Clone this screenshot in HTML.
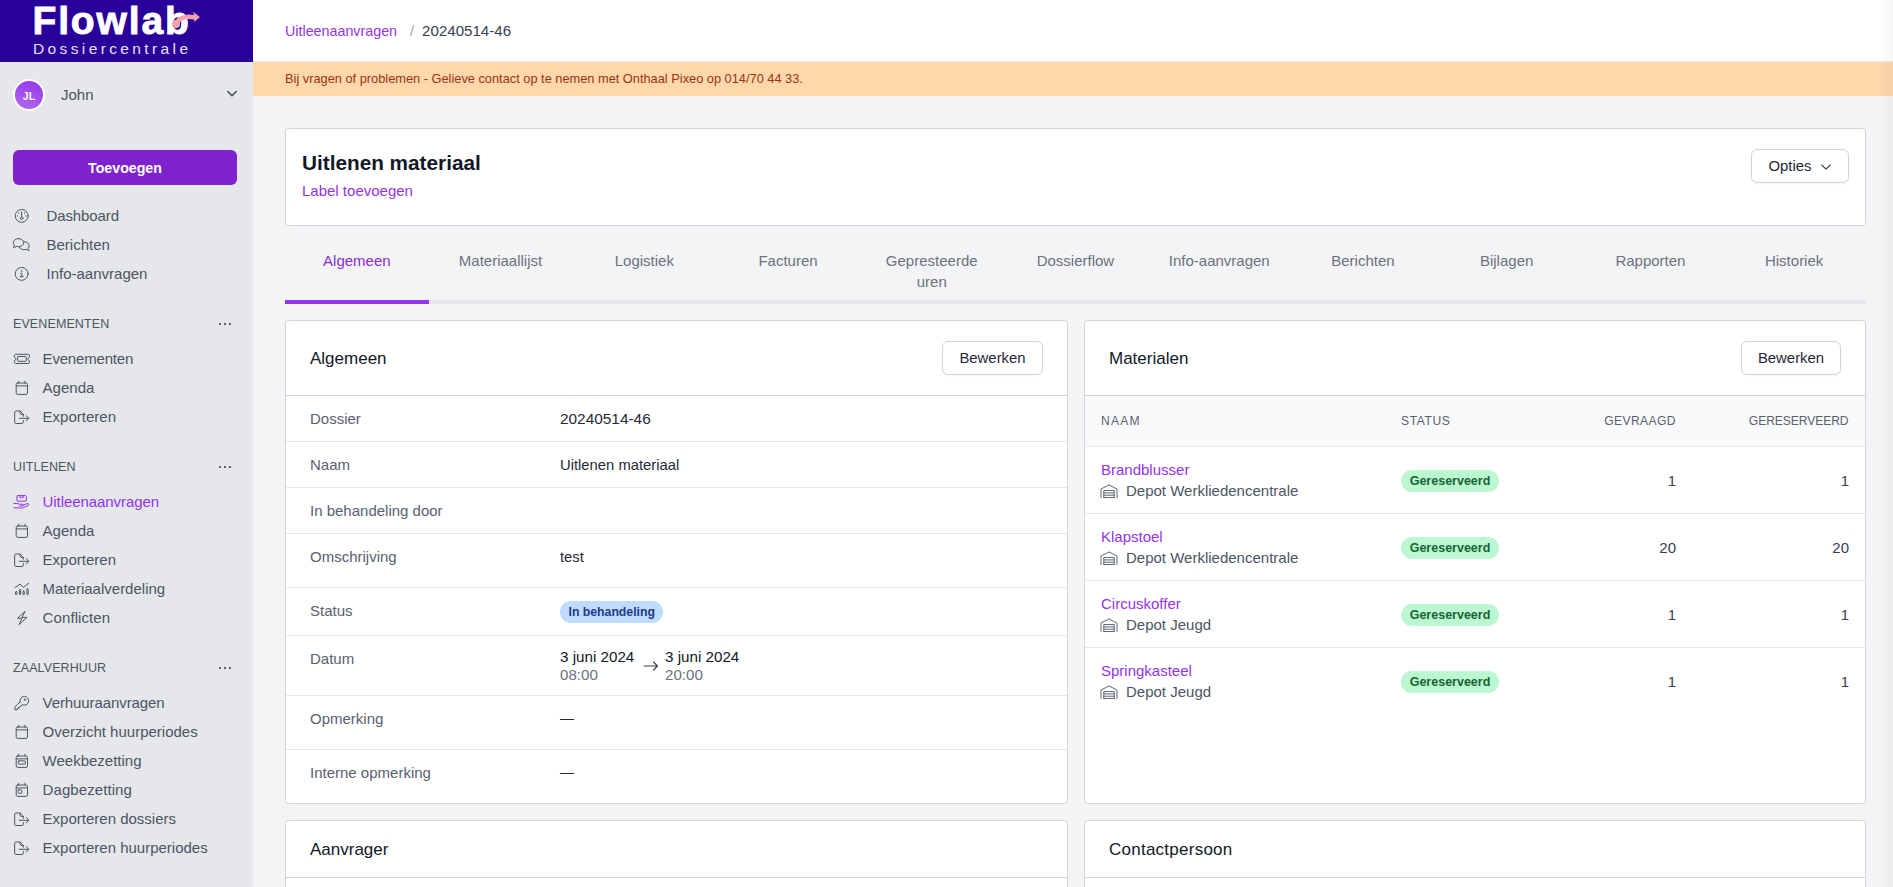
<!DOCTYPE html>
<html lang="nl">
<head>
<meta charset="utf-8">
<title>Uitlenen materiaal - Flowlab Dossiercentrale</title>
<style>
*{box-sizing:border-box;margin:0;padding:0}
html,body{width:1893px;height:887px;overflow:hidden}
body{font-family:"Liberation Sans",sans-serif;color:#111827;background:#f3f4f6;position:relative;font-size:15px}
a{text-decoration:none;color:#9333ea}
.abs{position:absolute}
/* sidebar */
#side{position:absolute;left:0;top:0;width:253px;height:887px;background:#e5e7eb}
#logo{position:absolute;left:0;top:0;width:253px;height:62px;background:#2a009a;color:#fff}
#logo .l1{position:absolute;left:32.500px;top:-1px;font-size:39px;font-weight:bold;letter-spacing:1.85px;line-height:44px;-webkit-text-stroke:0.9px #fff}
#logo .l2{position:absolute;left:33px;top:38.500px;font-size:15.5px;letter-spacing:3.38px;line-height:20px;color:#e6e0f7}
#user{position:absolute;left:0;top:62px;width:253px;height:66px}
#avatar{position:absolute;left:13px;top:17px;width:32px;height:32px;border-radius:50%;background:linear-gradient(200deg,#9333ea,#b26cf0);border:2px solid #fff;color:#fff;font-size:10.5px;font-weight:bold;text-align:center;line-height:31px}
#user .nm{position:absolute;left:61px;top:24px;font-size:15px;line-height:18px;color:#4b5563}
#add{position:absolute;left:13px;top:150px;width:224px;height:35px;border-radius:6px;background:#7e22ce;color:#fff;font-weight:bold;font-size:14.2px;text-align:center;line-height:37px}
.nav{position:absolute;left:0;width:253px;height:20px;line-height:20px;font-size:15px;color:#4b5563;white-space:nowrap}
.nav span{position:absolute;left:42.600px;top:0}
.nav.top span{left:46.500px}
.nav svg{position:absolute;left:10px;top:0;width:24px;height:20px;stroke:#4f5867;fill:none;stroke-width:1;stroke-linecap:round;stroke-linejoin:round}
.nav.act{color:#9333ea}
.nav.act svg{stroke:#9333ea}
.sec{position:absolute;left:13px;width:224px;height:18px;line-height:20px;font-size:12.5px;letter-spacing:0.1px;color:#4b5563;white-space:nowrap}
.sec .dots{position:absolute;left:206px;top:9px;fill:#535c6b}
/* main */
#topbar{position:absolute;left:253px;top:0;width:1640px;height:62px;background:#fff;border-bottom:1px solid #e5e7eb}
#crumb{position:absolute;left:32px;top:21px;font-size:14.5px;line-height:20px;color:#374151;white-space:nowrap}
#crumb .sl{color:#9ca3af;margin:0 8px 0 13px}
#banner{position:absolute;left:253px;top:62px;width:1640px;height:34px;background:#fed7aa;color:#9a3412;font-size:12.8px;line-height:34px;padding-left:32px;white-space:nowrap}
.card{position:absolute;background:#fff;border:1px solid #d1d5db;border-radius:3.500px}
h1{position:absolute;left:16px;top:21px;font-size:20.75px;line-height:26px;font-weight:bold;color:#111827;white-space:nowrap}
.btn{position:absolute;background:#fff;border:1px solid #d1d5db;border-radius:6px;box-shadow:0 1px 2px rgba(0,0,0,0.05);font-size:14.9px;color:#1f2937;text-align:center;white-space:nowrap}
.tab{position:absolute;top:250px;width:143.7px;text-align:center;font-size:15px;line-height:21px;color:#6b7280}
.ctitle{position:absolute;left:24px;top:27px;font-size:17px;line-height:22px;color:#111827;white-space:nowrap}
.hr{position:absolute;left:0;right:0;height:1px;background:#e5e7eb}
.lb{position:absolute;left:24px;font-size:15px;line-height:20px;color:#596170;white-space:nowrap}
.vl{position:absolute;left:274px;font-size:14.8px;line-height:20px;color:#1f2937;white-space:nowrap}
.badge{display:inline-block;border-radius:11px;height:22px;line-height:22px;font-size:12.5px;font-weight:bold;padding:0 8.700px;white-space:nowrap}
.th{position:absolute;top:91.500px;font-size:12.1px;color:#596170;line-height:16px;white-space:nowrap}
.mn{position:absolute;left:16px;font-size:15px;line-height:20px;white-space:nowrap}
.ms{position:absolute;left:41px;font-size:15px;line-height:20px;color:#4b5563;white-space:nowrap}
.num{position:absolute;font-size:15px;line-height:20px;color:#374151;text-align:right;white-space:nowrap}
</style>
</head>
<body>
<div id="side">
  <div id="logo"><div class="l1">Flowlab</div><div class="l2">Dossiercentrale</div><svg class="abs" style="left:168px;top:8px" width="36" height="22" viewBox="168 8 36 22"><circle cx="176" cy="24.100" r="4" fill="#f4a3ad"/><path d="M176.500 22.500C180 17.600 187 15.600 194.500 17.300" fill="none" stroke="#f4a3ad" stroke-width="4.600" stroke-linecap="round"/><path d="M192.900 11.700L199.900 17.100 194 22.300C195 19.500 194.600 14.500 192.900 11.700z" fill="#f4a3ad"/></svg></div>
  <div id="user"><div id="avatar">JL</div><div class="nm">John</div><svg class="abs" style="left:226px;top:27px" width="12" height="10" viewBox="0 0 12 10" fill="none" stroke="#374151" stroke-width="1.350" stroke-linecap="round" stroke-linejoin="round"><path d="M1.800 2.500l4.200 4.200 4.200-4.200"/></svg></div>
  <div id="add">Toevoegen</div>
  <div class="nav top" style="top:206px"><svg viewBox="0 0 24 20"><circle cx="11.650" cy="9.900" r="6.450"/><path d="M11.650 5.800v5.200"/><circle cx="11.650" cy="12.300" r="1.250"/><path d="M7.500 9.900h.01M15.800 9.900h.01M8.700 6.900h.01M14.600 6.900h.01" stroke-width="1.200"/></svg><span style="letter-spacing:-0.1px">Dashboard</span></div>
  <div class="nav top" style="top:235px"><svg viewBox="0 0 24 20"><path d="M8.500 3.600c-2.900 0-5.200 1.800-5.200 4.100 0 1 .4 1.900 1.200 2.600-.2.800-.6 1.500-1.200 2.100 1.200 0 2.300-.4 3.100-1 .7.200 1.400.300 2.100.300 2.900 0 5.200-1.800 5.200-4.100S11.400 3.600 8.500 3.600z"/><path d="M14.400 6.700c2.700.200 4.800 1.900 4.800 4 0 1-.5 1.900-1.200 2.600.2.800.6 1.500 1.200 2.100-1.200 0-2.300-.4-3.100-1-.7.200-1.300.300-2 .300-2.200 0-4.100-1-4.800-2.500"/></svg><span>Berichten</span></div>
  <div class="nav top" style="top:264px"><svg viewBox="0 0 24 20"><circle cx="11.650" cy="9.900" r="6.450"/><path d="M10.500 9.300h1.300v3.200M10.300 12.600h2.900"/><path d="M11.500 7.100h.01" stroke-width="1.500"/></svg><span>Info-aanvragen</span></div>
  <div class="sec" style="top:314px">EVENEMENTEN<svg class="dots" width="14" height="4" viewBox="0 0 14 4"><rect x="0" y="0" width="2" height="2.100" rx=".2"/><rect x="5" y="0" width="2" height="2.100" rx=".2"/><rect x="10" y="0" width="2" height="2.100" rx=".2"/></svg></div>
  <div class="nav " style="top:349px"><svg viewBox="0 0 24 20"><path d="M4.400 6.400c0-.6.500-1.100 1.100-1.100h12.800c.6 0 1.100.5 1.100 1.100v1.700c-.9.200-1.500.9-1.500 1.800s.6 1.600 1.500 1.800v1.700c0 .6-.5 1.100-1.100 1.100H5.500c-.6 0-1.100-.5-1.100-1.100v-1.700c.9-.2 1.500-.9 1.500-1.800s-.6-1.600-1.500-1.800z"/><rect x="7.600" y="7.500" width="8.600" height="4.800" rx=".7"/></svg><span style="letter-spacing:-0.19px">Evenementen</span></div>
  <div class="nav " style="top:378px"><svg viewBox="0 0 24 20"><rect x="6.2" y="5" width="11.300" height="11.400" rx="1.500"/><path d="M6.200 7.900h11.300M8.700 3.200v1.800M15 3.200v1.800"/></svg><span>Agenda</span></div>
  <div class="nav " style="top:407px"><svg viewBox="0 0 24 20"><path d="M13.300 13.500v1.900c0 .6-.5 1.100-1.100 1.100H5.800c-.6 0-1.100-.5-1.100-1.100V5.100c0-.6.500-1.100 1.100-1.100h4.300l3.200 3.400v2"/><path d="M10.100 4.100v2.300c0 .6.500 1.100 1.100 1.100h2.100"/><path d="M9.300 11.300h9.500M16.200 8.700l2.700 2.600-2.700 2.600"/></svg><span>Exporteren</span></div>
  <div class="sec" style="top:457px">UITLENEN<svg class="dots" width="14" height="4" viewBox="0 0 14 4"><rect x="0" y="0" width="2" height="2.100" rx=".2"/><rect x="5" y="0" width="2" height="2.100" rx=".2"/><rect x="10" y="0" width="2" height="2.100" rx=".2"/></svg></div>
  <div class="nav act" style="top:492px"><svg viewBox="0 0 24 20"><rect x="6.900" y="3.600" width="9.400" height="5.600" rx=".9"/><path d="M10.100 3.600v2.300l1.500-.6 1.500.6V3.600"/><path d="M4 11.500h2.800c1 0 1.600.3 2.300.7h3c.7 0 1.100.4 1.100.9s-.4.900-1.100.9H9.600"/><path d="M13.200 13.200l3.700-1.500c.8-.3 1.500-.1 1.800.4.300.6 0 1.100-.6 1.400l-5.200 2.400c-.5.200-1 .3-1.600.2l-3.700-.3H4"/></svg><span style="letter-spacing:-0.07px">Uitleenaanvragen</span></div>
  <div class="nav " style="top:521px"><svg viewBox="0 0 24 20"><rect x="6.2" y="5" width="11.300" height="11.400" rx="1.500"/><path d="M6.200 7.900h11.300M8.700 3.200v1.800M15 3.200v1.800"/></svg><span>Agenda</span></div>
  <div class="nav " style="top:550px"><svg viewBox="0 0 24 20"><path d="M13.300 13.500v1.900c0 .6-.5 1.100-1.100 1.100H5.800c-.6 0-1.100-.5-1.100-1.100V5.100c0-.6.500-1.100 1.100-1.100h4.300l3.200 3.400v2"/><path d="M10.100 4.100v2.300c0 .6.500 1.100 1.100 1.100h2.100"/><path d="M9.300 11.300h9.500M16.200 8.700l2.700 2.600-2.700 2.600"/></svg><span>Exporteren</span></div>
  <div class="nav " style="top:579px"><svg viewBox="0 0 24 20"><path d="M5.100 8.600l5-3.500 3.200 3.300 5.400-4.100"/><rect x="5.5" y="12.5" width="1.3" height="3.2" rx=".65"/><rect x="9.4" y="10.5" width="1.3" height="5.2" rx=".65"/><rect x="13" y="12" width="1.3" height="3.700" rx=".65"/><rect x="16.9" y="9.5" width="1.3" height="6.2" rx=".65"/></svg><span>Materiaalverdeling</span></div>
  <div class="nav " style="top:608px"><svg viewBox="0 0 24 20"><path d="M14.800 3.600L7.400 10.200h4.700L9 16.600l8-7.200h-4.600z"/></svg><span style="letter-spacing:0.09px">Conflicten</span></div>
  <div class="sec" style="top:658px">ZAALVERHUUR<svg class="dots" width="14" height="4" viewBox="0 0 14 4"><rect x="0" y="0" width="2" height="2.100" rx=".2"/><rect x="5" y="0" width="2" height="2.100" rx=".2"/><rect x="10" y="0" width="2" height="2.100" rx=".2"/></svg></div>
  <div class="nav " style="top:693px"><svg viewBox="0 0 24 20"><path d="M10.050 8.940L4.900 13.900V16.700H7.600V15.200H9.200V13.700H10.500L12.100 11.610A4.400 4.400 0 1 0 10.050 8.940z"/><circle cx="14.900" cy="6.700" r=".7"/></svg><span style="letter-spacing:-0.09px">Verhuuraanvragen</span></div>
  <div class="nav " style="top:722px"><svg viewBox="0 0 24 20"><rect x="6.2" y="5" width="11.300" height="11.400" rx="1.500"/><path d="M6.200 7.900h11.300M8.700 3.200v1.800M15 3.200v1.800"/></svg><span>Overzicht huurperiodes</span></div>
  <div class="nav " style="top:751px"><svg viewBox="0 0 24 20"><rect x="6.2" y="5" width="11.300" height="11.400" rx="1.500"/><path d="M6.200 7.900h11.300M8.700 3.200v1.800M15 3.200v1.800"/><rect x="8.300" y="9.900" width="7.100" height="3.200" rx=".6"/></svg><span>Weekbezetting</span></div>
  <div class="nav " style="top:780px"><svg viewBox="0 0 24 20"><rect x="6.2" y="5" width="11.300" height="11.400" rx="1.500"/><path d="M6.200 7.900h11.300M8.700 3.200v1.800M15 3.200v1.800"/><rect x="8" y="9.800" width="3.800" height="3.500" rx=".8"/></svg><span style="letter-spacing:0.08px">Dagbezetting</span></div>
  <div class="nav " style="top:809px"><svg viewBox="0 0 24 20"><path d="M13.300 13.500v1.900c0 .6-.5 1.100-1.100 1.100H5.800c-.6 0-1.100-.5-1.100-1.100V5.100c0-.6.500-1.100 1.100-1.100h4.300l3.200 3.400v2"/><path d="M10.100 4.100v2.300c0 .6.500 1.100 1.100 1.100h2.100"/><path d="M9.300 11.300h9.500M16.200 8.700l2.700 2.600-2.700 2.600"/></svg><span>Exporteren dossiers</span></div>
  <div class="nav " style="top:838px"><svg viewBox="0 0 24 20"><path d="M13.300 13.500v1.900c0 .6-.5 1.100-1.100 1.100H5.800c-.6 0-1.100-.5-1.100-1.100V5.100c0-.6.500-1.100 1.100-1.100h4.300l3.200 3.400v2"/><path d="M10.100 4.100v2.300c0 .6.500 1.100 1.100 1.100h2.100"/><path d="M9.300 11.300h9.500M16.200 8.700l2.700 2.600-2.700 2.600"/></svg><span>Exporteren huurperiodes</span></div>
</div>
<div id="topbar"><div id="crumb"><a style="font-size:14.3px">Uitleenaanvragen</a><span class="sl">/</span><span style="font-size:15.1px">20240514-46</span></div></div>
<div id="banner">Bij vragen of problemen - Gelieve contact op te nemen met Onthaal Pixeo op 014/70 44 33.</div>
<div class="card" style="left:285px;top:128px;width:1581px;height:98px">
  <h1>Uitlenen materiaal</h1>
  <a class="abs" style="left:16px;top:52px;font-size:15px;line-height:20px;white-space:nowrap">Label toevoegen</a>
  <div class="btn" style="left:1465px;top:20px;width:98px;height:34px;line-height:32px;text-align:left;padding-left:16.500px">Opties<svg class="abs" style="left:68px;top:10.500px" width="12" height="12" viewBox="0 0 12 12" fill="none" stroke="#374151" stroke-width="1.1" stroke-linecap="round" stroke-linejoin="round"><path d="M1.800 4l4.200 4.200L10.200 4"/></svg></div>
</div>
<div class="abs" style="left:285px;top:300px;width:1581px;height:4px;background:#e5e7eb"></div>
<div class="abs" style="left:285px;top:300px;width:144px;height:4px;background:#9333ea"></div>
<div class="tab" style="left:285.0px;color:#8b2bd9">Algemeen</div>
<div class="tab" style="left:428.7px">Materiaallijst</div>
<div class="tab" style="left:572.5px">Logistiek</div>
<div class="tab" style="left:716.2px">Facturen</div>
<div class="tab" style="left:859.9px">Gepresteerde<br>uren</div>
<div class="tab" style="left:1003.6px">Dossierflow</div>
<div class="tab" style="left:1147.4px">Info-aanvragen</div>
<div class="tab" style="left:1291.1px">Berichten</div>
<div class="tab" style="left:1434.8px">Bijlagen</div>
<div class="tab" style="left:1578.6px">Rapporten</div>
<div class="tab" style="left:1722.3px">Historiek</div>
<div class="card" style="left:285px;top:320px;width:783px;height:484px">
  <div class="ctitle">Algemeen</div>
  <div class="btn" style="left:656px;top:20px;width:101px;height:34px;line-height:32px">Bewerken</div>
  <div class="hr" style="top:74px;background:#d1d5db"></div>
  <div class="lb" style="top:88px">Dossier</div>
  <div class="vl" style="top:88px;font-size:15.4px">20240514-46</div>
  <div class="hr" style="top:120px"></div>
  <div class="lb" style="top:134px">Naam</div>
  <div class="vl" style="top:134px">Uitlenen materiaal</div>
  <div class="hr" style="top:166px"></div>
  <div class="lb" style="top:180px">In behandeling door</div>
  <div class="hr" style="top:212px"></div>
  <div class="lb" style="top:226px">Omschrijving</div>
  <div class="vl" style="top:226px">test</div>
  <div class="hr" style="top:266px"></div>
  <div class="lb" style="top:280px">Status</div>
  <div class="vl" style="top:280px"><span class="badge" style="background:#bfdbfe;color:#1e3a8a;font-size:12.25px;padding:0 8.500px">In behandeling</span></div>
  <div class="hr" style="top:314px"></div>
  <div class="lb" style="top:328px">Datum</div>
  <div class="vl" style="top:326px;color:#111827;font-size:15.2px">3 juni 2024</div><div class="vl" style="top:344px;color:#6b7280;font-size:15.1px">08:00</div>
  <svg class="abs" style="left:357px;top:339px" width="16" height="12" viewBox="0 0 16 12" fill="none" stroke="#374151" stroke-width="1.1" stroke-linecap="round" stroke-linejoin="round"><path d="M1 6h13.500M10.500 2l4 4-4 4"/></svg>
  <div class="vl" style="left:379px;top:326px;color:#111827;font-size:15.2px">3 juni 2024</div><div class="vl" style="left:379px;top:344px;color:#6b7280;font-size:15.1px">20:00</div>
  <div class="hr" style="top:374px"></div>
  <div class="lb" style="top:388px">Opmerking</div>
  <div class="vl" style="top:387px;font-size:14px">—</div>
  <div class="hr" style="top:428px"></div>
  <div class="lb" style="top:442px">Interne opmerking</div>
  <div class="vl" style="top:441px;font-size:14px">—</div>
</div>
<div class="card" style="left:1084px;top:320px;width:782px;height:484px">
  <div class="ctitle">Materialen</div>
  <div class="btn" style="left:656px;top:20px;width:100px;height:34px;line-height:32px">Bewerken</div>
  <div class="hr" style="top:74px;background:#d1d5db"></div>
  <div class="abs" style="left:0;top:75px;width:780px;height:50px;background:#f9fafb"></div>
  <div class="hr" style="top:125px"></div>
  <div class="th" style="left:16px;letter-spacing:1.2px">NAAM</div><div class="th" style="left:316px;letter-spacing:0.6px">STATUS</div><div class="th" style="right:189px;letter-spacing:0.4px">GEVRAAGD</div><div class="th" style="right:16.500px;letter-spacing:-0.08px">GERESERVEERD</div>
  <a class="mn" style="top:139px">Brandblusser</a>
  <svg class="abs" style="left:15px;top:163px" width="18" height="14.500" viewBox="0 0 18 15" preserveAspectRatio="none" fill="none" stroke="#5b6472" stroke-width="1" stroke-linejoin="round" stroke-linecap="round"><path d="M1 14V5.200L9 1l8 4.200V14"/><path d="M3.800 14V6.800h10.400V14M3.800 9.200h10.400M3.800 11.600h10.400M3.800 14h10.400"/></svg>
  <div class="ms" style="top:160px">Depot Werkliedencentrale</div>
  <div class="abs" style="left:316px;top:149px"><span class="badge" style="background:#bbf7d0;color:#166534">Gereserveerd</span></div>
  <div class="num" style="right:189px;top:150px">1</div><div class="num" style="right:16px;top:150px">1</div>
  <div class="hr" style="top:192px"></div>
  <a class="mn" style="top:206px">Klapstoel</a>
  <svg class="abs" style="left:15px;top:230px" width="18" height="14.500" viewBox="0 0 18 15" preserveAspectRatio="none" fill="none" stroke="#5b6472" stroke-width="1" stroke-linejoin="round" stroke-linecap="round"><path d="M1 14V5.200L9 1l8 4.200V14"/><path d="M3.800 14V6.800h10.400V14M3.800 9.200h10.400M3.800 11.600h10.400M3.800 14h10.400"/></svg>
  <div class="ms" style="top:227px">Depot Werkliedencentrale</div>
  <div class="abs" style="left:316px;top:216px"><span class="badge" style="background:#bbf7d0;color:#166534">Gereserveerd</span></div>
  <div class="num" style="right:189px;top:217px">20</div><div class="num" style="right:16px;top:217px">20</div>
  <div class="hr" style="top:259px"></div>
  <a class="mn" style="top:273px">Circuskoffer</a>
  <svg class="abs" style="left:15px;top:297px" width="18" height="14.500" viewBox="0 0 18 15" preserveAspectRatio="none" fill="none" stroke="#5b6472" stroke-width="1" stroke-linejoin="round" stroke-linecap="round"><path d="M1 14V5.200L9 1l8 4.200V14"/><path d="M3.800 14V6.800h10.400V14M3.800 9.200h10.400M3.800 11.600h10.400M3.800 14h10.400"/></svg>
  <div class="ms" style="top:294px">Depot Jeugd</div>
  <div class="abs" style="left:316px;top:283px"><span class="badge" style="background:#bbf7d0;color:#166534">Gereserveerd</span></div>
  <div class="num" style="right:189px;top:284px">1</div><div class="num" style="right:16px;top:284px">1</div>
  <div class="hr" style="top:326px"></div>
  <a class="mn" style="top:340px">Springkasteel</a>
  <svg class="abs" style="left:15px;top:364px" width="18" height="14.500" viewBox="0 0 18 15" preserveAspectRatio="none" fill="none" stroke="#5b6472" stroke-width="1" stroke-linejoin="round" stroke-linecap="round"><path d="M1 14V5.200L9 1l8 4.200V14"/><path d="M3.800 14V6.800h10.400V14M3.800 9.200h10.400M3.800 11.600h10.400M3.800 14h10.400"/></svg>
  <div class="ms" style="top:361px">Depot Jeugd</div>
  <div class="abs" style="left:316px;top:350px"><span class="badge" style="background:#bbf7d0;color:#166534">Gereserveerd</span></div>
  <div class="num" style="right:189px;top:351px">1</div><div class="num" style="right:16px;top:351px">1</div>
</div>
<div class="card" style="left:285px;top:820px;width:783px;height:120px">
  <div class="ctitle" style="top:18px">Aanvrager</div>
  <div class="hr" style="top:56px;background:#d1d5db"></div>
</div>
<div class="card" style="left:1084px;top:820px;width:782px;height:120px">
  <div class="ctitle" style="top:18px;letter-spacing:0.25px">Contactpersoon</div>
  <div class="hr" style="top:56px;background:#d1d5db"></div>
</div>
<div class="abs" style="left:1879px;top:0;width:14px;height:887px;background:linear-gradient(90deg,rgba(0,0,0,0),rgba(0,0,0,0.037))"></div>
</body>
</html>
